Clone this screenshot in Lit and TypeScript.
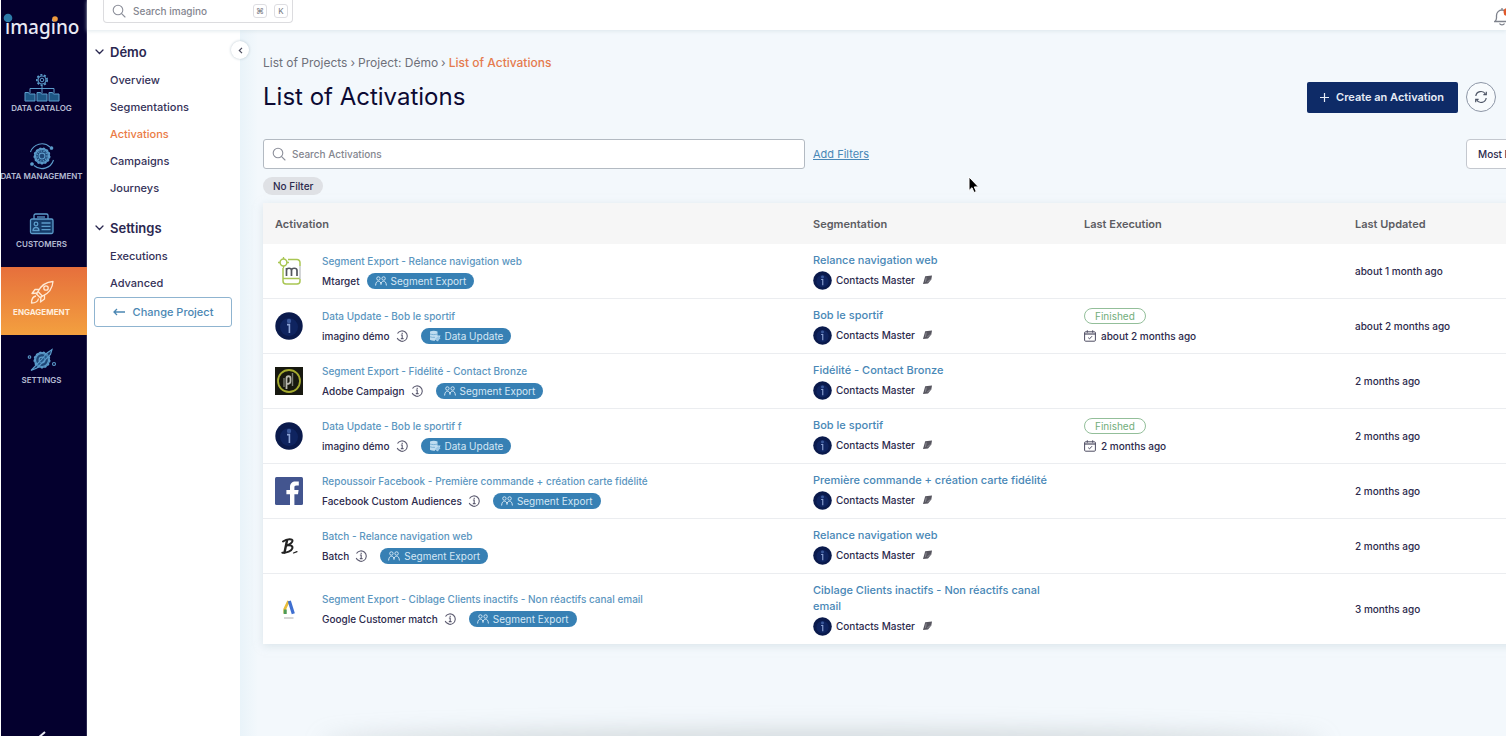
import { LitElement, html, css, svg, nothing, TemplateResult } from "lit";
import { customElement } from "lit/decorators.js";

type Kind = "segment" | "data";

interface Activation {
  logo: string;
  title: string;
  platform: string;
  info: boolean;
  kind: Kind;
  segmentation: string;
  execution?: string;
  updated: string;
}

const rows: Activation[] = [
  { logo: "mtarget", title: "Segment Export - Relance navigation web", platform: "Mtarget", info: false, kind: "segment", segmentation: "Relance navigation web", updated: "about 1 month ago" },
  { logo: "imagino", title: "Data Update - Bob le sportif", platform: "imagino démo", info: true, kind: "data", segmentation: "Bob le sportif", execution: "about 2 months ago", updated: "about 2 months ago" },
  { logo: "adobe", title: "Segment Export - Fidélité - Contact Bronze", platform: "Adobe Campaign", info: true, kind: "segment", segmentation: "Fidélité - Contact Bronze", updated: "2 months ago" },
  { logo: "imagino", title: "Data Update - Bob le sportif f", platform: "imagino démo", info: true, kind: "data", segmentation: "Bob le sportif", execution: "2 months ago", updated: "2 months ago" },
  { logo: "facebook", title: "Repoussoir Facebook - Première commande + création carte fidélité", platform: "Facebook Custom Audiences", info: true, kind: "segment", segmentation: "Première commande + création carte fidélité", updated: "2 months ago" },
  { logo: "batch", title: "Batch - Relance navigation web", platform: "Batch", info: true, kind: "segment", segmentation: "Relance navigation web", updated: "2 months ago" },
  { logo: "google", title: "Segment Export - Ciblage Clients inactifs - Non réactifs canal email", platform: "Google Customer match", info: true, kind: "segment", segmentation: "Ciblage Clients inactifs - Non réactifs canal email", updated: "3 months ago" },
];

/* Circle badge of the imagino brand, reused at several sizes. */
const imaginoBadge = (size: number) => html`<svg width=${size} height=${size} viewBox="0 0 28 28" aria-hidden="true">
  <circle cx="14" cy="14" r="13.7" fill="#0a1a4c"/>
  <circle cx="14" cy="15" r="9" fill="#11296a" opacity=".7"/>
  <circle cx="14" cy="9" r="2.2" fill="#3c5a9c"/>
  <path d="M12 12.6h2.4V21" fill="none" stroke="#8fa5d6" stroke-width="1.6"/>
</svg>`;

const logos: Record<string, TemplateResult> = {
  imagino: imaginoBadge(28),
  mtarget: html`<svg width="28" height="28" viewBox="0 0 28 28" fill="none" aria-hidden="true">
    <path d="M13 2.500h9a3 3 0 0 1 3 3V9M8 11v13a3 3 0 0 0 3 3h11a3 3 0 0 0 3-3v-2" stroke="#a9c653" stroke-width="1.500"/>
    <path d="M8 21.500h17" stroke="#a9c653" stroke-width="1.500"/>
    <path d="M25 9v13" stroke="#b5b9bd" stroke-width="1.200"/>
    <circle cx="8.500" cy="5.500" r="3.400" stroke="#a9c653" stroke-width="1.500"/>
    <path d="M8.500 0v2M8.500 9v2M3 5.500h2M12 5.500h2" stroke="#a9c653" stroke-width="1.300"/>
    <path d="M11.500 19v-8M11.500 13.500c0-3 5-3 5 0V19M16.500 13.500c0-3 5.500-3 5.500 0V19" stroke="#54575e" stroke-width="1.700"/>
  </svg>`,
  adobe: html`<svg width="28" height="28" viewBox="0 0 28 28" fill="none" aria-hidden="true">
    <path d="M0 0h28v28H0z" fill="#17180f"/>
    <circle cx="14" cy="14" r="11" stroke="#a5ab2f" stroke-width="1.800"/>
    <path d="M11.500 22V11.500c0-3 4-3 4 0v2.500c0 2.500-2 3-4 3" stroke="#b9b9b0" stroke-width="1.800"/>
    <path d="M17.500 6v13M9 11v9" stroke="#7b7c72" stroke-width="1.400"/>
  </svg>`,
  facebook: html`<svg width="28" height="28" viewBox="0 0 28 28" aria-hidden="true">
    <rect width="28" height="28" rx="1.500" fill="#43558f"/>
    <path d="M15 28V17.200h-3.600v-4.200H15V10c0-3.700 2.200-5.600 5.500-5.600 1.500 0 2.900.1 3.300.2v3.800h-2.300c-1.800 0-2.100.9-2.100 2.100V13h4.200l-.6 4.200h-3.600V28z" fill="#fff"/>
  </svg>`,
  batch: html`<svg width="28" height="28" viewBox="0 0 28 28" fill="none" stroke="#222" stroke-linecap="round" stroke-linejoin="round" aria-hidden="true">
    <path d="M12 8.500 9.500 20.500" stroke-width="2.400"/>
    <path d="M8 9.500c4-3 10-3 9.500-.6-.3 2-3 3.600-6 4.600 4-.8 6.600.3 5.800 3-.8 2.500-5.300 4.600-10 4.200" stroke-width="2"/>
    <path d="M18.500 21l3.500-1.400" stroke-width="1.200"/>
  </svg>`,
  google: html`<svg width="28" height="28" viewBox="0 0 28 28" fill="none" aria-hidden="true">
    <path d="M13.600 6 9.800 14v4.600" stroke="#e9bd3c" stroke-width="2.800"/>
    <path d="M10.200 14.500v4.500" stroke="#4d9b58" stroke-width="3"/>
    <path d="M14.300 6l4 12.800" stroke="#3f6fd0" stroke-width="3.200"/>
    <path d="M9 23h9.500" stroke="#c9c9c9" stroke-width="1.500"/>
  </svg>`,
};

const searchIcon = html`<svg width="14" height="14" viewBox="0 0 14 14" fill="none" stroke="#8c8f9a" stroke-width="1.100" stroke-linecap="round" aria-hidden="true">
  <circle cx="6" cy="6" r="4.800"/><path d="M9.600 9.600 13 13"/></svg>`;

const infoIcon = html`<svg class="info" width="12" height="12" viewBox="0 0 12 12" fill="none" stroke="#5c5b70" stroke-width="1.100" aria-hidden="true">
  <path d="M1.200 8A5.200 5.200 0 1 0 1.500 3.600M2.500 9.800 5 11.100"/><path d="M4.900 5h1.300v3.600M4.800 8.600h2.800M6.200 2.800V4"/></svg>`;

const peopleIcon = html`<svg width="12" height="10" viewBox="0 0 12 10" fill="none" stroke="#cfe4f3" stroke-width="1" aria-hidden="true">
  <circle cx="3.400" cy="2.500" r="1.700"/><circle cx="8.600" cy="2.500" r="1.700"/>
  <path d="M.6 9.500C.8 6.300 2 5.200 3.400 5.200S6 6.300 6 8.500c0-2.200 1.200-3.300 2.600-3.300s2.600 1.100 2.800 4.300"/></svg>`;

const dataIcon = html`<svg width="12" height="12" viewBox="0 0 12 12" aria-hidden="true">
  <path d="M1 1.500C3 .4 6.500.4 8.500 1.500V5.500H11.500L9 11.500 6 9.500v1.200C4 10.700 1.800 10.300 1 9.700z" fill="#bfdcf0"/>
  <path d="M1 4c2 .8 5 .8 7.500 0M1 6.800c1.500.6 3.500.7 5 .5" fill="none" stroke="#5f9fcb" stroke-width=".7"/>
  <path d="M6.500 8.500 9.500 6l2 2.500-3.500 2.500z" fill="#9cc7e6"/></svg>`;

const tagIcon = html`<svg width="11" height="10" viewBox="0 0 11 10" aria-hidden="true">
  <path d="M3.200 1.200 10 .6 9.300 4.500 6 8.500 1 9z" fill="#57565f"/><path d="M3.500 6.800 4.200 2.500M5.200 7l3.400-2.600" stroke="#b9b8c0" stroke-width=".5"/></svg>`;

const calendarIcon = html`<svg width="12" height="12" viewBox="0 0 12 12" fill="none" stroke="#4d4c62" stroke-width="1" aria-hidden="true">
  <rect x=".6" y="1.800" width="10.800" height="9.400" rx="1"/><path d="M.6 4h10.800" stroke-width="1.200"/><path d="M3.300.3v2.400M8.700.3v2.400"/><path d="m4.200 7.600 1.300 1.300 2.500-2.700"/></svg>`;

const chevronDown = html`<svg width="9" height="6" viewBox="0 0 9 6" fill="none" stroke="#2a2850" stroke-width="1.300" stroke-linecap="round" aria-hidden="true"><path d="m1 1 3.500 3.500L8 1"/></svg>`;

/* Toothed wheel outline centred on (cx, cy). */
const gear = (cx: number, cy: number, r: number) => svg`
  <circle cx=${cx} cy=${cy} r=${r} stroke-width="1.200"/>
  <circle cx=${cx} cy=${cy} r=${r + 1.2} stroke-dasharray="2 1.700" stroke-width="1.600"/>
  <circle cx=${cx} cy=${cy} r=${r * 0.45}/>`;

const railIcons: Record<string, TemplateResult> = {
  catalog: html`<svg width="36" height="30" viewBox="0 0 36 30" fill="none" stroke="#5c9ccb" stroke-width="1" aria-hidden="true">
    ${gear(18, 7, 4)}
    <path d="M18 12.500V20M6 20v-4.500h24V20"/>
    <path d="M1 19.500h3.500l1 1.500H11v7H1zM13 19.500h3.500l1 1.500H23v7H13zM25 19.500h3.500l1 1.500H35v7H25z" fill="#1e5684"/></svg>`,
  management: html`<svg width="28" height="28" viewBox="0 0 28 28" fill="none" stroke="#5c9ccb" stroke-width="1.100" aria-hidden="true">
    <circle cx="14" cy="14" r="7.500" fill="#1e4676"/>${gear(14, 14, 6.5)}<circle cx="14" cy="14" r="5" stroke-dasharray="1.500 1.200"/>
    <path d="M2.500 10A12 12 0 0 1 22 5M25.500 18A12 12 0 0 1 6 23.500"/>
    <circle cx="23.500" cy="6" r="1.300" fill="#5c9ccb"/><circle cx="4" cy="22" r="1.300" fill="#5c9ccb"/></svg>`,
  customers: html`<svg width="26" height="22" viewBox="0 0 26 22" fill="none" stroke="#5c9ccb" stroke-width="1.300" aria-hidden="true">
    <path d="M5 6V2.500A1.500 1.500 0 0 1 6.500 1h11A1.500 1.500 0 0 1 19 2.500V6"/><path d="M8 4h8"/>
    <rect x="1.500" y="6" width="22.500" height="14.500" rx="1.500" fill="#153a69"/>
    <circle cx="7" cy="11" r="1.800"/><path d="M4 17.500c.3-4 5.700-4 6 0zM12.500 10h9M12.500 13.300h9M12.500 16.600h9"/></svg>`,
  engagement: html`<svg width="26" height="26" viewBox="0 0 26 26" fill="none" stroke="#ffe9d4" stroke-width="1.300" stroke-linejoin="round" aria-hidden="true">
    <path d="M9 12.500C12 6.500 17 3 24 2.500 23.500 9.500 19.500 14.500 13.500 17.200z"/><circle cx="17" cy="9" r="2.200"/>
    <path d="M10 10.500H6L3 14.500l5.500-.5M15.500 16v4L11.500 23l.5-5.500"/>
    <path d="M9 12.500 7.500 15l3.500 3.500 2.500-1.300M7 17c-3 .5-4.500 3-4.500 7 4 0 6.500-1.500 7-4.500"/></svg>`,
  settings: html`<svg width="30" height="24" viewBox="0 0 30 24" fill="none" stroke="#5c9ccb" stroke-width="1.100" aria-hidden="true">
    <circle cx="15" cy="12" r="7.500" fill="#1e4676"/>${gear(15, 12, 6.5)}
    <path d="M4 22.500 14 12l6-7 5-3.500-1.500 5L10 20z" fill="#2d6a9e" fill-opacity=".5"/>
    <circle cx="2.500" cy="9" r="1.300"/><circle cx="27" cy="16" r="1.500"/></svg>`,
};

const railItems: [string, string][] = [
  ["catalog", "DATA CATALOG"],
  ["management", "DATA MANAGEMENT"],
  ["customers", "CUSTOMERS"],
  ["engagement", "ENGAGEMENT"],
  ["settings", "SETTINGS"],
];

@customElement("app-rail")
class AppRail extends LitElement {
  static styles = css`
    :host { display: block; position: relative; width: 86px; flex: none; margin-left: 1px; background: #04002e; box-shadow: inset -1px 0 #2b2850; overflow: hidden; }
    .logo { position: relative; height: 63px; box-sizing: border-box; padding: 11px 0 0 4px; font: 500 19px/32px "Noto Sans", sans-serif; color: #e9e9f4; }
    .dots { position: absolute; left: 0; top: 10px; }
    nav { display: flex; flex-direction: column; }
    .item { display: flex; flex-direction: column; align-items: center; height: 68px; box-sizing: border-box; padding: 8px 5px 0 0; color: #b4bbd2; text-decoration: none; font-size: 8px; font-weight: 600; line-height: 12px; white-space: nowrap; }
    .pic { display: flex; align-items: center; height: 34px; margin-bottom: -3px; }
    .active { background: linear-gradient(#e66f3c, #f3a03f); color: #ffeedd; font-weight: 700; }
    .collapse { position: absolute; left: 28px; top: calc(100vh - 8px); padding: 0; border: 0; background: none; }
    .collapse svg { display: block; }
  `;
  render() {
    return html`
      <div class="logo">imagino
        <svg class="dots" width="86" height="20" aria-hidden="true"><circle cx="7" cy="8" r="4.300" fill="#2d7ba8"/><circle cx="54" cy="9" r="2.800" fill="#ef9a3d"/></svg>
      </div>
      <nav aria-label="Modules">
        ${railItems.map(([id, label]) => html`<a href="#" class="item ${id === "engagement" ? "active" : ""}"><span class="pic">${railIcons[id]}</span>${label}</a>`)}
      </nav>
      <button class="collapse" aria-label="Collapse"><svg width="24" height="16" viewBox="0 0 24 16" fill="none" stroke="#e9e9f4" stroke-width="2"><path d="M16 4 9 10l7 6"/></svg></button>
    `;
  }
}

@customElement("app-root")
class AppRoot extends LitElement {
  static styles = css`
    :host { display: flex; height: 100vh; overflow: hidden; background: #fff; font: 500 10px/16px Inter, sans-serif; color: #2b294c; }
    a { color: #4887b6; text-decoration: none; }
    button, input, select { font: inherit; color: inherit; }
    svg { flex: none; display: block; }

    .page { flex: 1; min-width: 0; display: flex; flex-direction: column; }
    .topbar { height: 30px; flex: none; display: flex; justify-content: space-between; padding: 0 0 0 16px; position: relative; z-index: 1; box-shadow: 0 1px 4px #cfdde2aa; background: #fff; }
    .global { display: flex; align-items: center; gap: 7px; width: 190px; height: 23px; box-sizing: border-box; padding: 0 4px 0 8px; border: 1px solid #dcdcdf; border-top: 0; border-radius: 0 0 4px 4px; }
    .global input { flex: 1; min-width: 0; border: 0; outline: 0; padding: 0; background: none; }
    input::placeholder { color: #84868f; opacity: 1; }
    kbd { width: 14px; height: 14px; border: 1px solid #dedee2; border-radius: 3px; font: 8px/12px Inter, "DejaVu Sans", sans-serif; text-align: center; color: #73747d; box-sizing: border-box; }
    .bell { position: relative; width: 12px; padding: 3px 0 0; border: 0; background: none; overflow: hidden; text-align: left; }

    .body { flex: 1; display: flex; min-height: 0; }
    .side { position: relative; width: 153px; flex: none; box-sizing: border-box; padding: 8px 8px 0 7px; background: #fff; }
    .group { display: flex; align-items: center; gap: 6px; height: 28px; margin: 0; padding: 0 0 1px 1px; font-size: 13px; font-weight: 600; color: #2a2750; }
    .links { display: flex; flex-direction: column; margin: 0 0 12px 16px; }
    .links a { color: #343158; font-size: 11px; line-height: 27px; }
    .links .on { color: #ea7b45; }
    .last { margin-bottom: 0; }
    .change { display: flex; align-items: center; justify-content: center; gap: 8px; width: 100%; height: 30px; border: 1px solid #8fb4d0; border-radius: 3px; background: #fff; color: #4b87b3; font-size: 11px; font-weight: 500; }
    .fold { position: absolute; top: 11px; right: -9px; width: 18px; height: 18px; padding: 0; border: 0; border-radius: 50%; background: #fff; box-shadow: 0 0 3px #b9c6cf; display: grid; place-items: center; z-index: 1; }

    main { position: relative; flex: 1; min-width: 0; overflow: hidden; box-sizing: border-box; padding: 24px 0 0 23px; background: linear-gradient(90deg, #e9f3f9, #f3f8fc 18px); }
    .crumbs { display: flex; gap: 3px; font-size: 12px; line-height: 18px; color: #6e7079; font-weight: 400; }
    .crumbs a { color: inherit; }
    .crumbs .here { color: #e57b4e; font-weight: 500; }
    .head { display: flex; align-items: center; justify-content: space-between; padding-right: 10px; margin-bottom: 17px; }
    h1 { margin: 0; font-size: 24px; line-height: 32px; font-weight: 400; color: #0c0a33; padding: 9px 0; }
    .actions { display: flex; align-items: center; gap: 8px; }
    .create { display: flex; align-items: center; gap: 7px; height: 31px; padding: 0 14px 0 13px; border: 0; border-radius: 2px; background: #0e2b67; color: #e6ecf6; font-size: 11px; font-weight: 600; }
    .refresh { width: 30px; height: 30px; padding: 0; display: grid; place-items: center; border: 1px solid #8d96a6; border-radius: 50%; background: #f8fbfd; }

    .wide { width: calc(100% + 108px); }
    .tools { display: flex; align-items: center; gap: 8px; }
    .search { display: flex; align-items: center; gap: 6px; flex: 0 0 542px; height: 30px; box-sizing: border-box; padding: 0 8px; border: 1px solid #b3bac2; border-radius: 3px; background: #fff; }
    .search input { flex: 1; border: 0; outline: 0; padding: 0; background: none; }
    .add { text-decoration: underline; font-size: 11px; font-weight: 400; }
    .sort { margin-left: auto; width: 148px; height: 30px; padding: 0 11px; border: 1px solid #c4c8cf; border-radius: 4px; background: #fff; appearance: none; }
    .chip { display: inline-block; margin: 8px 0; padding: 0 10px; border-radius: 9px; background: #dfe1e5; line-height: 18px; }

    table { table-layout: fixed; border-collapse: collapse; background: #fff; box-shadow: 0 2px 8px #c5d3dc88; }
    th { height: 41px; box-sizing: border-box; padding: 0 12px; background: #f6f6f6; text-align: left; font-size: 11px; font-weight: 600; color: #5c5c62; }
    .col { width: 271px; }
    td { padding: 8px 12px; height: 54px; box-sizing: border-box; border-bottom: 1px solid #ebedf0; vertical-align: middle; }
    tbody tr:last-child td { border-bottom: 0; }
    .act { display: flex; align-items: center; gap: 19px; }
    .stack { display: flex; flex-direction: column; gap: 4px; align-items: flex-start; }
    .stack a { color: #5b96c0; }
    .line { display: flex; align-items: center; height: 16px; }
    .info { margin: 0 6px 0 6px; }
    .badge { display: flex; align-items: center; gap: 4px; height: 16px; margin-left: 7px; padding: 0 8px; border-radius: 8px; background: #3780b4; color: #d5e7f4; font-weight: 400; }
    .seg { font-size: 11px; display: block; margin-bottom: 2px; }
    .source { display: flex; align-items: center; gap: 4px; height: 20px; }
    .source svg:last-child { margin-left: 3px; }
    .done { height: 14px; padding: 0 10px; border: 1px solid #93bf9a; border-radius: 8px; color: #71ad7a; line-height: 14px; font-weight: 400; }
    .when { gap: 5px; }

    .haze { position: absolute; left: 90px; right: 190px; bottom: -12px; height: 10px; border-radius: 50%; box-shadow: 0 0 22px 8px #9fa9ad66; }
    .pointer { position: absolute; left: 728px; top: 146px; }
  `;

  private row(r: Activation) {
    return html`<tr>
      <td><div class="act">${logos[r.logo]}
        <div class="stack"><a href="#">${r.title}</a>
          <div class="line"><span>${r.platform}</span>${r.info ? infoIcon : nothing}
            <span class="badge">${r.kind === "segment" ? peopleIcon : dataIcon}${r.kind === "segment" ? "Segment Export" : "Data Update"}</span></div></div></div></td>
      <td><a href="#" class="seg">${r.segmentation}</a><div class="source">${imaginoBadge(19)}<span>Contacts Master</span>${tagIcon}</div></td>
      <td>${r.execution ? html`<div class="stack"><span class="done">Finished</span><div class="line when">${calendarIcon}<span>${r.execution}</span></div></div>` : nothing}</td>
      <td>${r.updated}</td>
    </tr>`;
  }

  render() {
    return html`
      <app-rail></app-rail>
      <div class="page">
        <header class="topbar">
          <label class="global">${searchIcon}<input type="text" aria-label="Search imagino" placeholder="Search imagino"><kbd>⌘</kbd><kbd>K</kbd></label>
          <button class="bell" aria-label="Notifications"><svg width="18" height="18" viewBox="0 0 18 18" fill="none" stroke="#7e828c" stroke-width="1.300"><path d="M.8 13.500c1.200-1 1.700-2 1.700-3.500V7.500a5.500 5.500 0 0 1 11 0V10c0 1.500.5 2.500 1.700 3.500zM5.500 15.500c1 1.800 4 1.800 5 0M8 0v2"/><circle cx="13.500" cy="4" r="4" fill="#e0592c" stroke="none"/></svg></button>
        </header>
        <div class="body">
          <aside class="side">
            <button class="fold" aria-label="Collapse menu"><svg width="5" height="7" viewBox="0 0 5 7" fill="none" stroke="#4a4a5c" stroke-width="1.200"><path d="M4 .8 1.300 3.500 4 6.200"/></svg></button>
            <h2 class="group">${chevronDown}Démo</h2>
            <nav class="links" aria-label="Démo"><a href="#">Overview</a><a href="#">Segmentations</a><a href="#" class="on">Activations</a><a href="#">Campaigns</a><a href="#">Journeys</a></nav>
            <h2 class="group">${chevronDown}Settings</h2>
            <nav class="links last" aria-label="Settings"><a href="#">Executions</a><a href="#">Advanced</a></nav>
            <button class="change"><svg width="12" height="8" viewBox="0 0 12 8" fill="none" stroke="#4b87b3" stroke-width="1.300"><path d="M12 4H1M4 1 1 4l3 3"/></svg>Change Project</button>
          </aside>
          <main>
            <nav class="crumbs" aria-label="Breadcrumb"><a href="#">List of Projects</a><span>›</span><a href="#">Project: Démo</a><span>›</span><a href="#" class="here">List of Activations</a></nav>
            <div class="head">
              <h1>List of Activations</h1>
              <div class="actions">
                <button class="create"><svg width="9" height="9" viewBox="0 0 9 9" stroke="#e6ecf6" stroke-width="1.200"><path d="M4.500 0v9M0 4.500h9"/></svg>Create an Activation</button>
                <button class="refresh" aria-label="Refresh"><svg width="14" height="14" viewBox="0 0 14 14" fill="none" stroke="#4d5566" stroke-width="1.200"><path d="M1.800 6A5.200 5.200 0 0 1 11.500 4.200M12.200 8a5.200 5.200 0 0 1-9.700 1.800"/><path d="M12.300 1.800v2.900H9.400M1.700 12.200V9.300h2.900"/></svg></button>
              </div>
            </div>
            <div class="tools wide">
              <label class="search">${searchIcon}<input type="text" aria-label="Search Activations" placeholder="Search Activations"></label>
              <a href="#" class="add">Add Filters</a>
              <select class="sort" aria-label="Sort order"><option>Most Recent</option></select>
            </div>
            <span class="chip">No Filter</span>
            <table class="wide">
              <thead><tr><th>Activation</th><th class="col">Segmentation</th><th class="col">Last Execution</th><th class="col">Last Updated</th></tr></thead>
              <tbody>${rows.map((r) => this.row(r))}</tbody>
            </table>
            <div class="haze"></div>
            <svg class="pointer" width="13" height="18" viewBox="0 0 13 18" aria-hidden="true"><path d="M1 1v13.500l3-2.800 2 4.800 2.300-1-2-4.600h4.200z" fill="#000" stroke="#fff" stroke-width="1"/></svg>
          </main>
        </div>
      </div>
    `;
  }
}
